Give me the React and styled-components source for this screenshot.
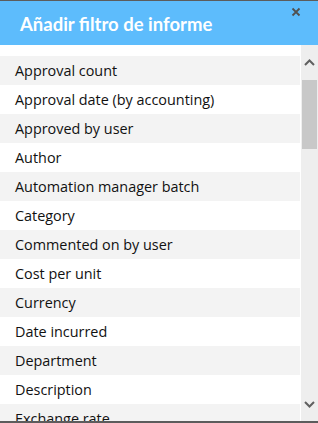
import React from "react";
import styled, { createGlobalStyle } from "styled-components";

const Global = createGlobalStyle`
  html, body { margin: 0; padding: 0; background: #5c5c5c; }
  body { width: 318px; height: 423px; overflow: hidden; }
`;

const Dialog = styled.div`
  margin-top: 1px;
  width: 318px;
  height: 420px;
  background: #ffffff;
  display: flex;
  flex-direction: column;
  overflow: hidden;
  position: relative;
`;

const Header = styled.div`
  height: 44px;
  background: #5dbcfc;
  display: flex;
  align-items: center;
  padding-left: 20px;
  flex-shrink: 0;
`;

const Title = styled.h1`
  margin: 0;
  margin-top: 1px;
  font-family: "Lato", "Open Sans", sans-serif;
  font-weight: 700;
  font-size: 18.5px;
  color: #ffffff;
  letter-spacing: 0;
`;

const Close = styled.button`
  position: absolute;
  top: 4px;
  right: 15px;
  width: 14px;
  height: 14px;
  padding: 0;
  border: 0;
  background: transparent;
  display: flex;
  align-items: center;
  justify-content: center;
`;

const Body = styled.div`
  flex: 1;
  display: flex;
  min-height: 0;
`;

const List = styled.div`
  flex: 1;
  padding-top: 11px;
  margin-right: 1px;
  overflow: hidden;
`;

const Row = styled.div`
  height: 29px;
  display: flex;
  align-items: center;
  padding-left: 15px;
  background: ${(p) => (p.$alt ? "#f3f3f3" : "#ffffff")};
  font-family: "Open Sans", "Noto Sans", sans-serif;
  font-size: 14.4px;
  color: #111111;
  white-space: nowrap;
`;

const Scrollbar = styled.div`
  width: 17px;
  background: #eeeeee;
  display: flex;
  flex-direction: column;
  align-items: center;
  flex-shrink: 0;
`;

const ArrowBtn = styled.div`
  height: ${(p) => p.$h}px;
  width: 17px;
  display: flex;
  align-items: ${(p) => p.$align};
  justify-content: center;
  flex-shrink: 0;
`;

const Track = styled.div`
  flex: 1;
  width: 17px;
  display: flex;
  flex-direction: column;
  align-items: center;
`;

const Thumb = styled.div`
  width: 15px;
  height: 69px;
  background: #c8c8c8;
`;

const items = [
  "Approval count",
  "Approval date (by accounting)",
  "Approved by user",
  "Author",
  "Automation manager batch",
  "Category",
  "Commented on by user",
  "Cost per unit",
  "Currency",
  "Date incurred",
  "Department",
  "Description",
  "Exchange rate",
];

const Chevron = ({ up }) => (
  <svg width="11" height="7" viewBox="0 0 11 7">
    <path
      d={up ? "M1 6 L5.5 1.5 L10 6" : "M1 1 L5.5 5.5 L10 1"}
      fill="none"
      stroke="#606060"
      strokeWidth="2"
    />
  </svg>
);

export default function App() {
  return (
    <>
      <Global />
      <Dialog>
        <Header>
          <Title>Añadir filtro de informe</Title>
        </Header>
        <Close aria-label="close">
          <svg width="10" height="10" viewBox="0 0 10 10">
            <path d="M1.5 1.5 L8.5 8.5 M8.5 1.5 L1.5 8.5" stroke="#505050" strokeWidth="1.8" />
          </svg>
        </Close>
        <Body>
          <List>
            {items.map((t, i) => (
              <Row key={t} $alt={i % 2 === 0}>
                {t}
              </Row>
            ))}
          </List>
          <Scrollbar>
            <ArrowBtn $h={35} $align="center">
              <Chevron up />
            </ArrowBtn>
            <Track>
              <Thumb />
            </Track>
            <ArrowBtn $h={34} $align="center">
              <Chevron />
            </ArrowBtn>
          </Scrollbar>
        </Body>
      </Dialog>
    </>
  );
}
